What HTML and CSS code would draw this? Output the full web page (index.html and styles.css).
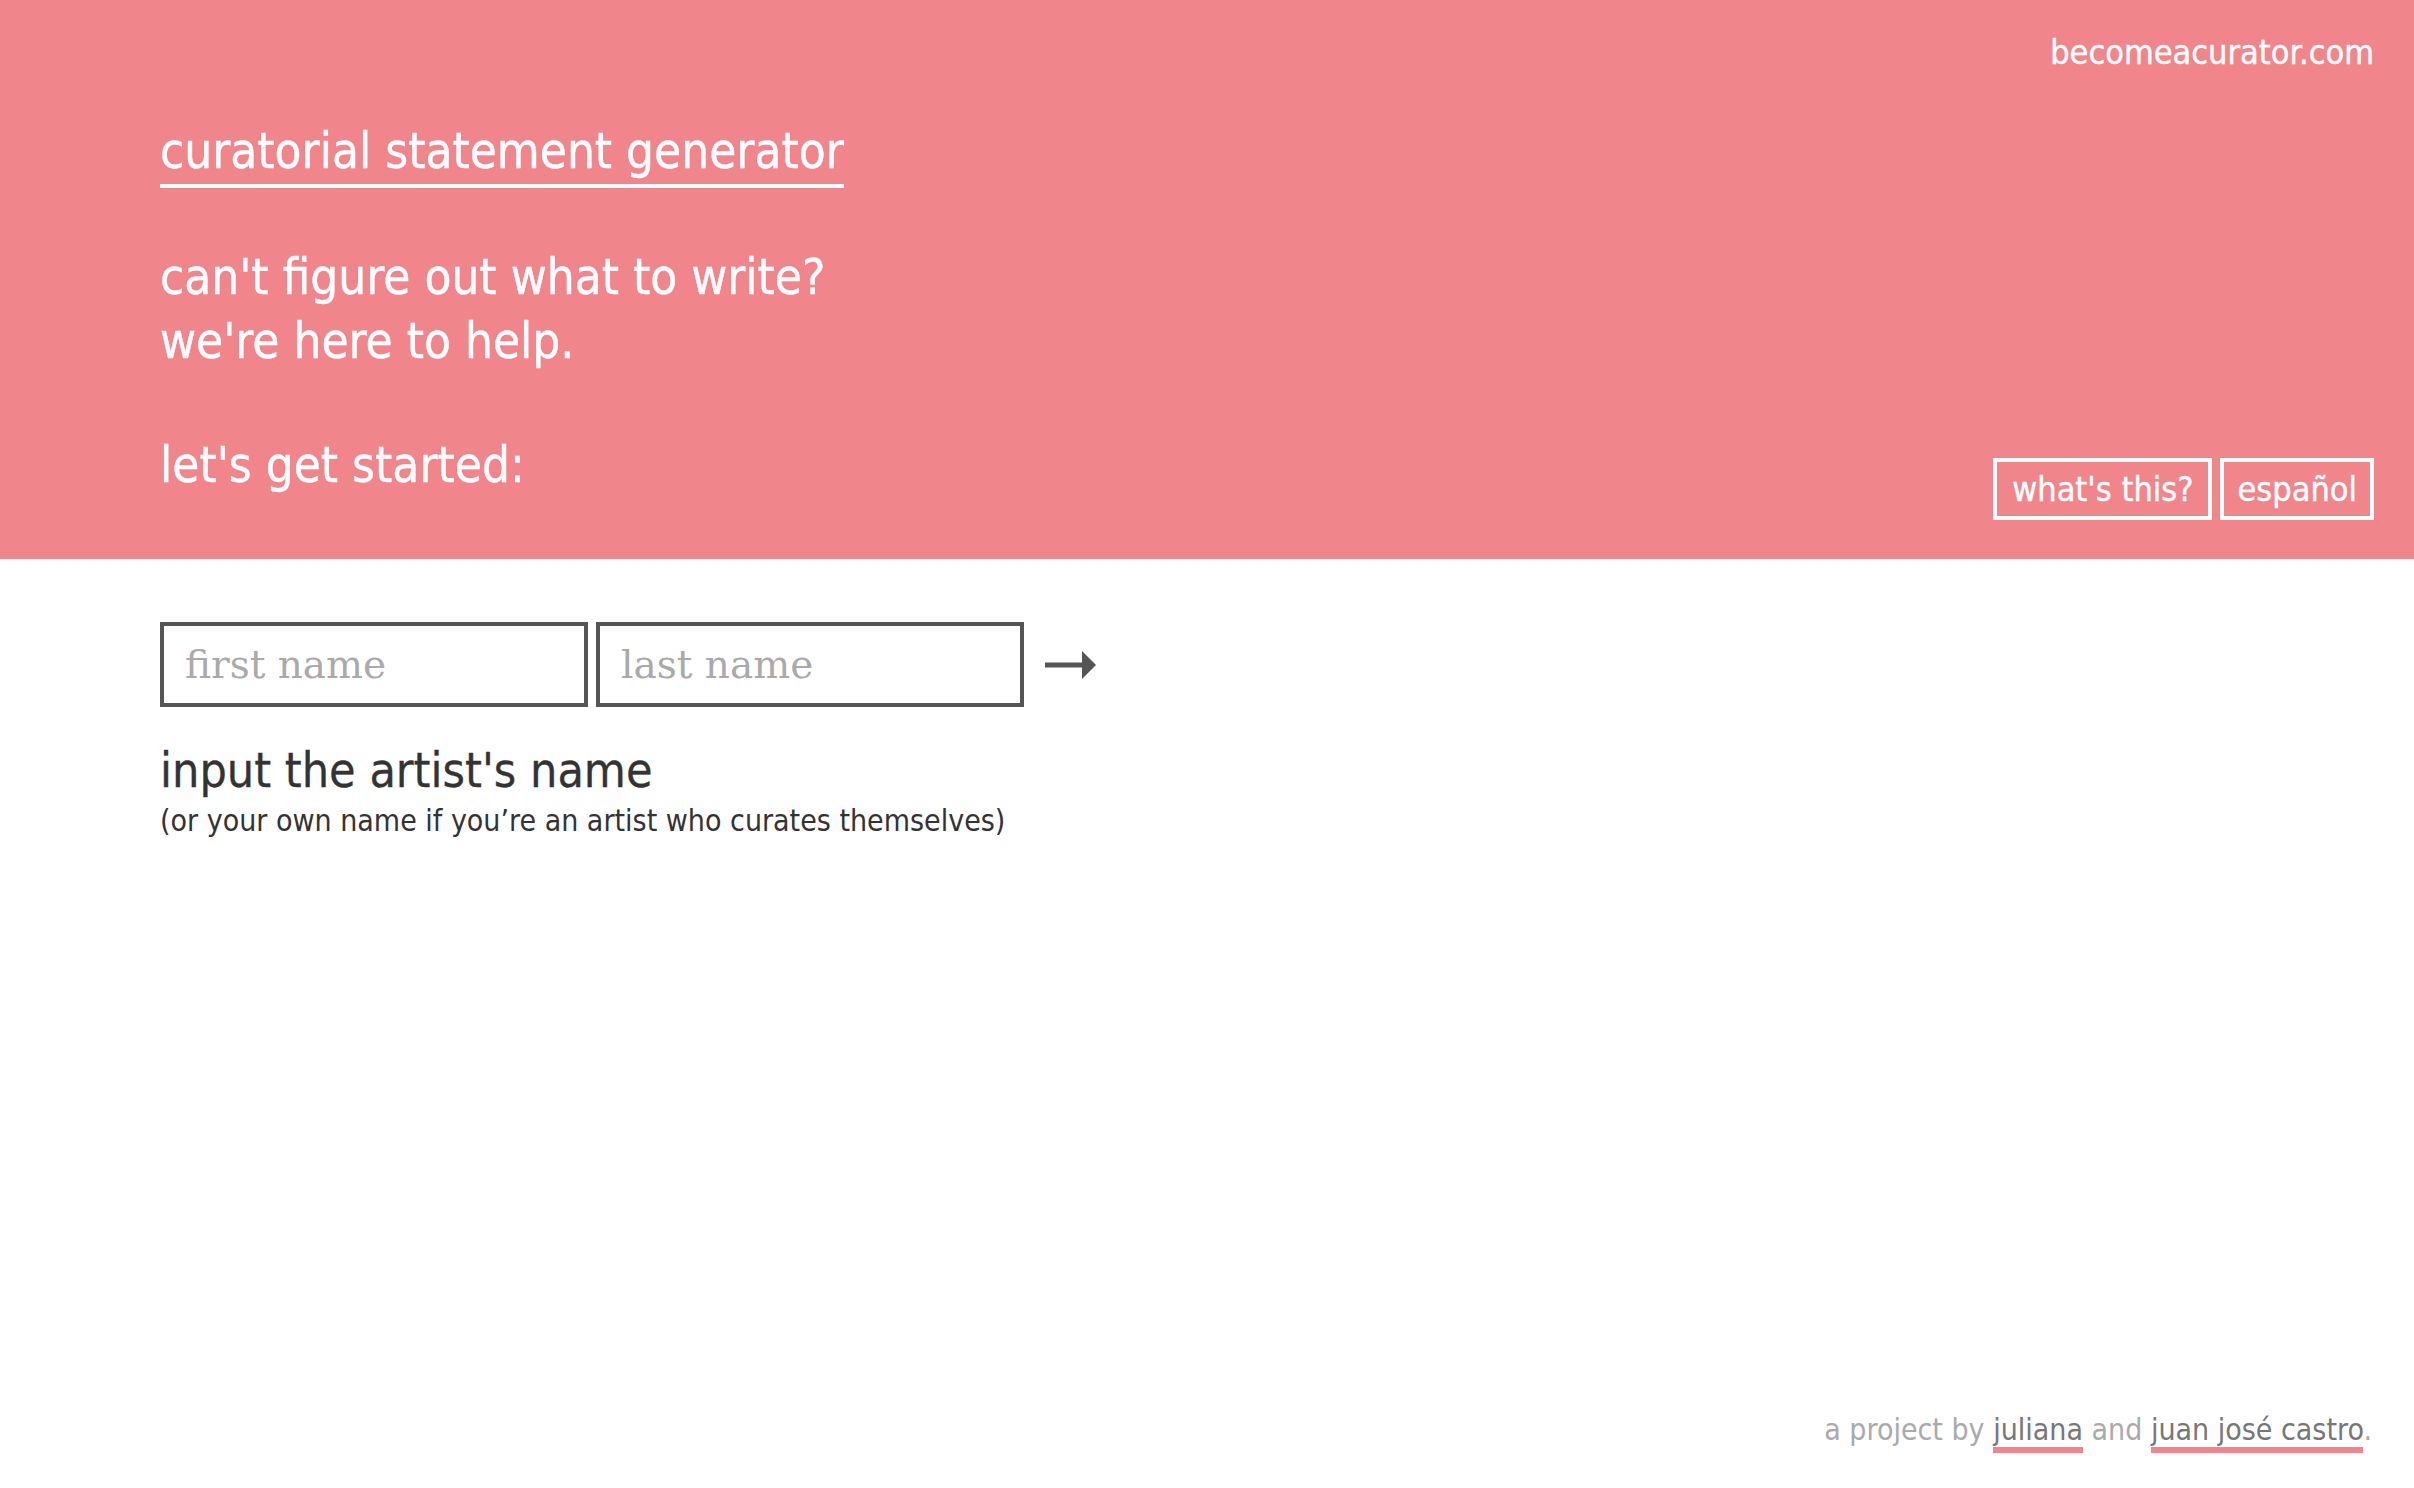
FILE: index.html
```html
<!DOCTYPE html>
<html lang="en">
<head>
<meta charset="utf-8">
<title>curatorial statement generator</title>
<link rel="stylesheet" href="styles.css">
</head>
<body>
<div class="page">
  <header class="hero">
    <div class="hero-main">
      <a class="title" href="#">curatorial statement generator</a>
      <p class="lead">can't figure out what to write?<br>we're here to help.</p>
      <p class="lead">let's get started:</p>
    </div>
    <div class="hero-side">
      <a class="site" href="#">becomeacurator.com</a>
      <div class="buttons">
        <a class="btn" href="#">what's this?</a>
        <a class="btn" href="#">español</a>
      </div>
    </div>
  </header>
  <main class="main">
    <form class="name-form">
      <input class="field" type="text" placeholder="first name">
      <input class="field" type="text" placeholder="last name">
      <button class="go" type="button" aria-label="next">
        <svg width="52" height="28" viewBox="0 0 52 28"><rect x="0" y="11.5" width="40" height="5" fill="#555"/><polygon points="37,0 51,14 37,28" fill="#555"/></svg>
      </button>
    </form>
    <h2 class="prompt">input the artist's name</h2>
    <p class="hint">(or your own name if you’re an artist who curates themselves)</p>
  </main>
  <footer class="footer">a project by <a href="#">juliana</a> and <a href="#">juan josé castro</a>.</footer>
</div>
</body>
</html>
```
FILE: styles.css
```css
html, body {
  margin: 0;
  padding: 0;
}
body {
  font-family: "DejaVu Sans Condensed", "DejaVu Sans", sans-serif;
  font-stretch: condensed;
  background: #fff;
  color: #333;
}
.page {
  min-height: 100vh;
  display: flex;
  flex-direction: column;
}
a { text-decoration: none; }

.hero {
  background: #f0868c;
  color: #fff;
  height: 559px;
  box-sizing: border-box;
  display: flex;
  justify-content: space-between;
  padding: 0 40px 0 160px;
  -webkit-text-stroke: 0.4px currentColor;
}
.hero-main {
  padding-top: 122px;
}
.title {
  display: inline-block;
  color: #fff;
  font-size: 49px;
  line-height: 60px;
  padding-bottom: 2px;
  border-bottom: 4px solid #fff;
}
.lead {
  margin: 58px 0 0;
  font-size: 49px;
  line-height: 64px;
}
.lead + .lead {
  margin-top: 60px;
}
.hero-side {
  display: flex;
  flex-direction: column;
  align-items: flex-end;
  justify-content: space-between;
  padding: 32px 0 39px;
}
.site {
  color: #fff;
  font-size: 34px;
  line-height: 40px;
}
.buttons {
  display: flex;
  gap: 8px;
}
.btn {
  color: #fff;
  font-size: 34px;
  line-height: 40px;
  border: 4px solid #fff;
  padding: 7px 15px;
}
.btn + .btn {
  padding: 7px 13px;
}

.main {
  padding: 63px 0 0 160px;
}
.name-form {
  display: flex;
  align-items: center;
  gap: 8px;
}
.field {
  box-sizing: border-box;
  width: 428px;
  height: 85px;
  border: 4px solid #555;
  border-radius: 0;
  padding: 0 21px;
  margin: 0;
  font-family: "DejaVu Serif", serif;
  font-size: 39px;
  color: #333;
  outline: none;
}
.field::placeholder {
  color: #aaa;
}
.go {
  background: none;
  border: 0;
  padding: 0;
  margin-left: 13px;
  display: flex;
  cursor: pointer;
}
.prompt {
  margin: 35px 0 0;
  font-weight: normal;
  font-size: 48px;
  line-height: 56px;
  color: #333;
  -webkit-text-stroke: 0.3px currentColor;
}
.hint {
  margin: 6px 0 0;
  font-size: 30px;
  line-height: 34px;
  color: #333;
}

.footer {
  margin-top: auto;
  text-align: right;
  padding: 0 42px 40px 0;
  font-size: 30px;
  line-height: 36px;
  color: #aaa;
}
.footer a {
  color: #777;
  border-bottom: 6px solid #f0868c;
}
```
